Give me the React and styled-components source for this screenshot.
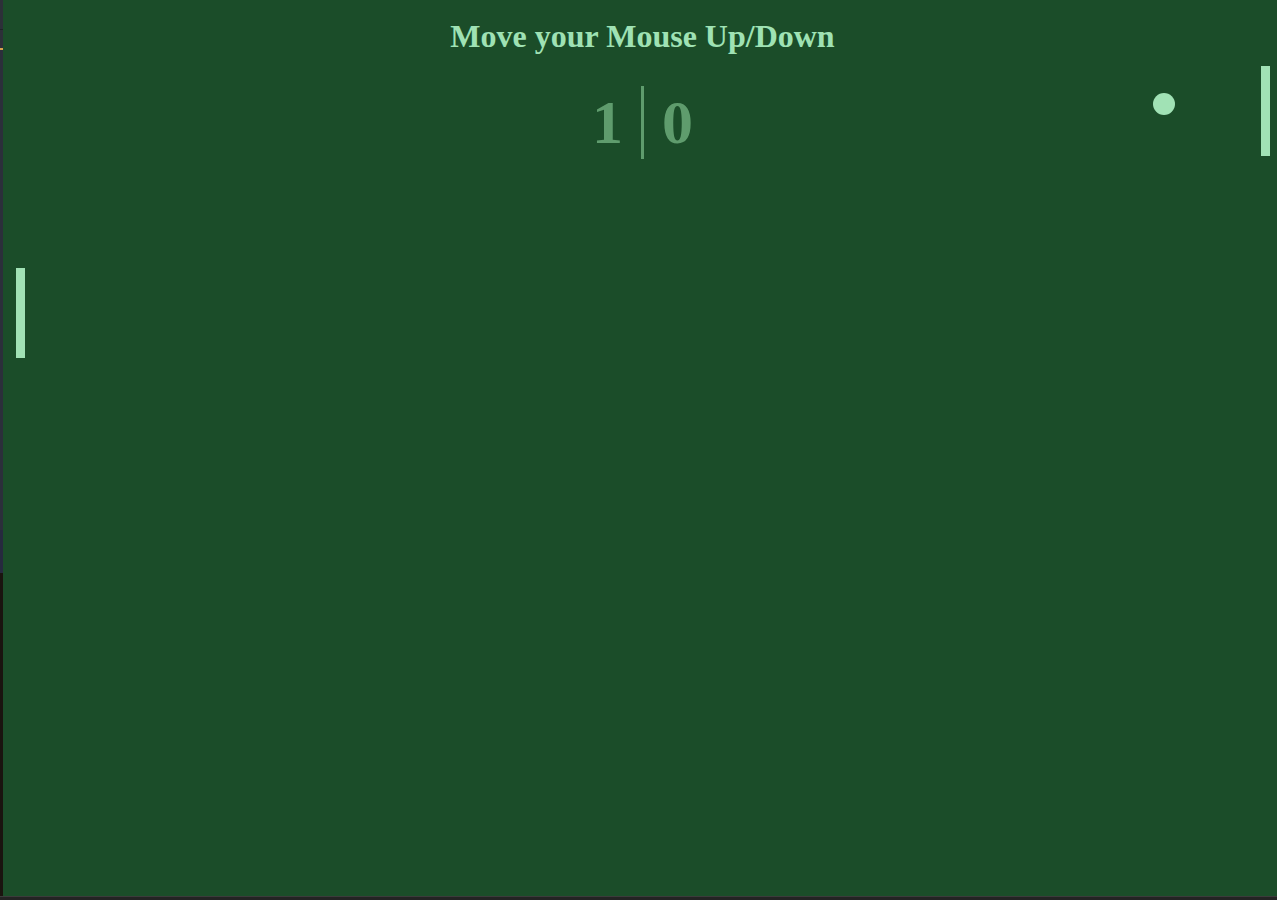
import React from 'react';
import styled, { createGlobalStyle } from "styled-components";

const GlobalStyle = createGlobalStyle`
  html, body {
    margin: 0;
    padding: 0;
    background-color: #1f1f1f;
    overflow: hidden;
  }
`

const Page = styled.div`
  display: flex;
  flex-direction: column;
  width: 1277px;
  height: 900px;
`

const Top = styled.div`
  display: flex;
  height: 896px;
`

const Gutter = styled.div`
  width: 3px;
  display: flex;
  flex-direction: column;
`

const GutterPart = styled.div`
  height: ${props => props.h}px;
  flex: ${props => props.grow ? 1 : 'none'};
  background-color: ${props => props.color};
`

const Court = styled.div`
  position: relative;
  flex: 1;
  background-color: #1b4d29;
  font-family: "Liberation Serif", "Times New Roman", serif;
  display: flex;
  flex-direction: column;
  align-items: center;
  overflow: hidden;
`

const Title = styled.h1`
  margin: 18px 0 0 5px;
  font-size: 32px;
  line-height: 37px;
  font-weight: bold;
  color: #9fe2b4;
`

const Score = styled.div`
  display: flex;
  align-items: center;
  gap: 18px;
  margin: 31px 0 0 5px;
  color: #5f9c6d;
  font-size: 62px;
  font-weight: bold;
  line-height: 73px;
`

const Divider = styled.div`
  width: 3px;
  height: 73px;
  background-color: #5f9c6d;
`

const Paddle = styled.div`
  position: absolute;
  top: ${props => props.top}px;
  left: ${props => props.left}px;
  width: 9px;
  height: 90px;
  background-color: #a1e2b5;
`

const Ball = styled.div`
  position: absolute;
  top: ${props => props.top}px;
  left: ${props => props.left}px;
  width: 22px;
  height: 22px;
  border-radius: 50%;
  background-color: #a1e2b5;
`

const BottomBar = styled.div`
  height: 4px;
  border-top: 1px solid #3b3b3b;
  box-sizing: border-box;
  background-color: #232323;
`

const App = () => {
    return (
        <Page>
            <GlobalStyle />
            <Top>
                <Gutter>
                    <GutterPart h={29} color="#2c3038" />
                    <GutterPart h={1} color="#1f2228" />
                    <GutterPart h={18} color="#2c3038" />
                    <GutterPart h={2} color="#d9a24e" />
                    <GutterPart h={480} color="#2b2f3a" />
                    <GutterPart h={43} color="#262a3e" />
                    <GutterPart grow color="#1a140f" />
                </Gutter>
                <Court>
                    <Title>Move your Mouse Up/Down</Title>
                    <Score>
                        <span>1</span>
                        <Divider />
                        <span>0</span>
                    </Score>
                    <Paddle top={268} left={13} />
                    <Paddle top={66} left={1258} />
                    <Ball top={93} left={1150} />
                </Court>
            </Top>
            <BottomBar />
        </Page>
    )
}

export default App;
